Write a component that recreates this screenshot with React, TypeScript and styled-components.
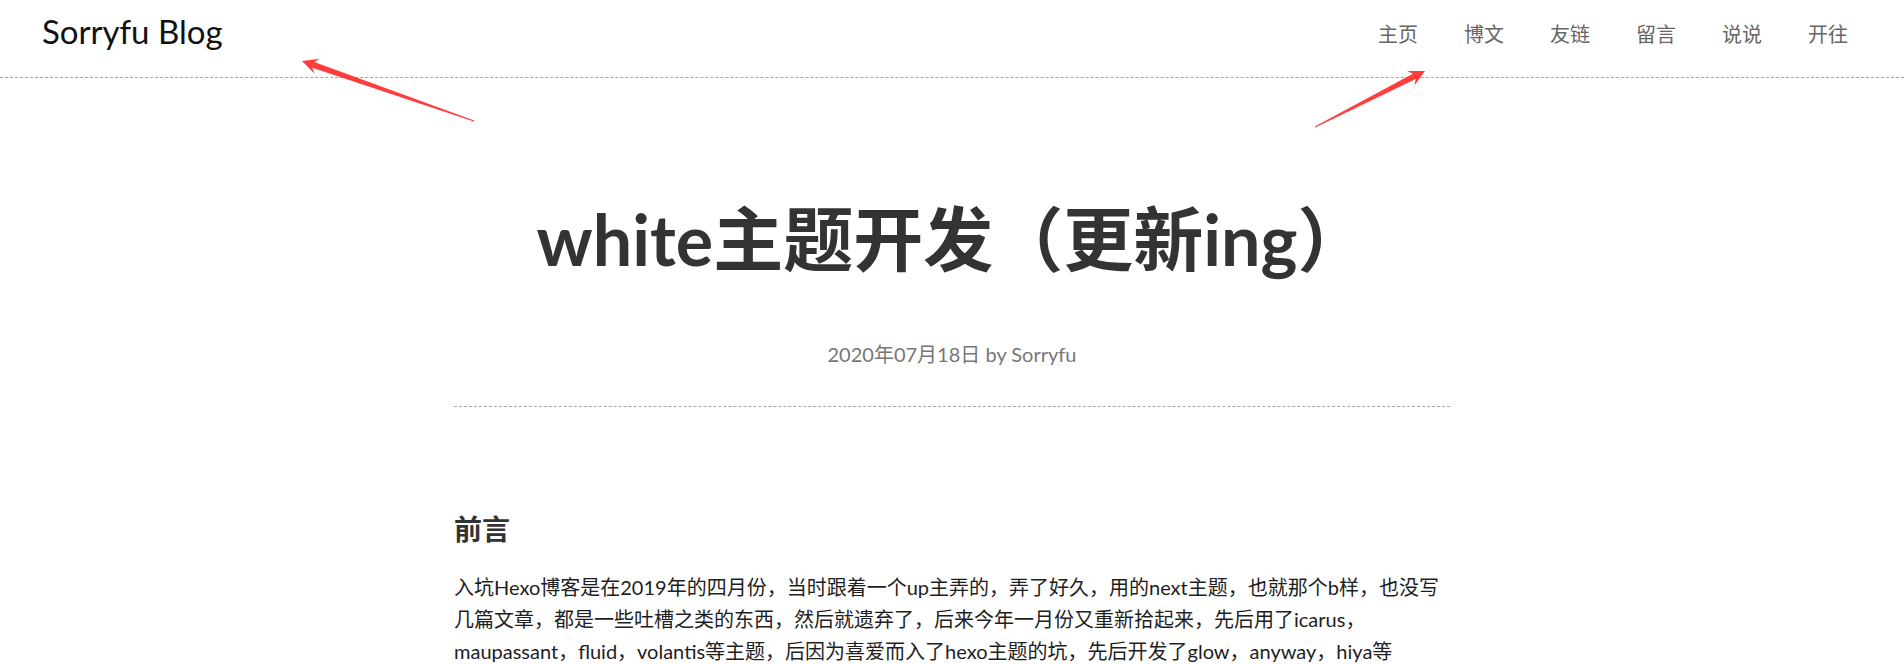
import React from "react";
import styled, { createGlobalStyle } from "styled-components";

const GlobalStyle = createGlobalStyle`
  html, body {
    margin: 0;
    padding: 0;
    background: #ffffff;
  }
  body {
    font-family: Lato, "Noto Sans CJK SC", "Noto Sans", sans-serif;
    color: #222;
  }
`;

const Page = styled.div`
  position: relative;
  width: 100%;
  height: 664px;
  overflow: hidden;
`;

const Header = styled.header`
  display: flex;
  justify-content: space-between;
  align-items: center;
  height: 78px;
  padding: 0 56px 0 42px;
  border-bottom: 1px dashed #a6a6a6;
  box-sizing: border-box;
`;

const Logo = styled.a`
  font-size: 33px;
  color: #111;
  text-decoration: none;
  line-height: 1;
  margin-top: -14px;
`;

const Nav = styled.nav`
  display: flex;
  gap: 46px;
  margin-top: -10px;
`;

const NavLink = styled.a`
  font-size: 20px;
  line-height: 1;
  color: #666;
  text-decoration: none;
`;

const Main = styled.main`
  width: 996px;
  margin: 0 auto;
`;

const PostHead = styled.div`
  display: flex;
  flex-direction: column;
  align-items: center;
  padding-top: 112px;
  padding-bottom: 37px;
  border-bottom: 1px dashed #a6a6a6;
`;

const Title = styled.h1`
  margin: 0;
  font-size: 70px;
  line-height: 98px;
  font-weight: 700;
  color: #333;
`;

const Meta = styled.div`
  margin-top: 51px;
  font-size: 20px;
  line-height: 30px;
  color: #777;
`;

const Section = styled.section`
  padding-top: 101px;
`;

const Heading = styled.h2`
  margin: 0;
  font-size: 28px;
  line-height: 42px;
  font-weight: 700;
  color: #333;
`;

const Paragraph = styled.p`
  margin: 21px 0 0;
  font-size: 20px;
  line-height: 32px;
  color: #1e1e1e;
  white-space: nowrap;
`;

const Overlay = styled.svg`
  position: absolute;
  left: 0;
  top: 0;
  pointer-events: none;
`;

function arrowPoints(
  tx: number,
  ty: number,
  hx: number,
  hy: number,
  headLen = 16,
  headHalf = 8,
  shaftHalf = 3,
  tailHalf = 0.5
): string {
  const dx = hx - tx;
  const dy = hy - ty;
  const len = Math.hypot(dx, dy);
  const ux = dx / len;
  const uy = dy / len;
  const px = -uy;
  const py = ux;
  const bx = hx - ux * headLen;
  const by = hy - uy * headLen;
  const nx = hx - ux * (headLen - 4);
  const ny = hy - uy * (headLen - 4);
  const pts: [number, number][] = [
    [tx + px * tailHalf, ty + py * tailHalf],
    [nx + px * shaftHalf, ny + py * shaftHalf],
    [bx + px * headHalf, by + py * headHalf],
    [hx, hy],
    [bx - px * headHalf, by - py * headHalf],
    [nx - px * shaftHalf, ny - py * shaftHalf],
    [tx - px * tailHalf, ty - py * tailHalf],
  ];
  return pts.map(([x, y]) => `${x.toFixed(1)},${y.toFixed(1)}`).join(" ");
}

const navItems = ["主页", "博文", "友链", "留言", "说说", "开往"];

export default function App() {
  return (
    <Page>
      <GlobalStyle />
      <Header>
        <Logo href="#">Sorryfu Blog</Logo>
        <Nav>
          {navItems.map((n) => (
            <NavLink key={n} href="#">
              {n}
            </NavLink>
          ))}
        </Nav>
      </Header>
      <Main>
        <PostHead>
          <Title>white主题开发（更新ing）</Title>
          <Meta>2020年07月18日 by Sorryfu</Meta>
        </PostHead>
        <Section>
          <Heading>前言</Heading>
          <Paragraph>
            入坑Hexo博客是在2019年的四月份，当时跟着一个up主弄的，弄了好久，用的next主题，也就那个b样，也没写
            <br />
            几篇文章，都是一些吐槽之类的东西，然后就遗弃了，后来今年一月份又重新拾起来，先后用了icarus，
            <br />
            maupassant，fluid，volantis等主题，后因为喜爱而入了hexo主题的坑，先后开发了glow，anyway，hiya等
          </Paragraph>
        </Section>
      </Main>
      <Overlay width="1904" height="664" viewBox="0 0 1904 664">
        <polygon points={arrowPoints(474, 121, 302, 61)} fill="#ff3d3d" />
        <polygon points={arrowPoints(1315, 127, 1425, 71)} fill="#ff3d3d" />
      </Overlay>
    </Page>
  );
}
